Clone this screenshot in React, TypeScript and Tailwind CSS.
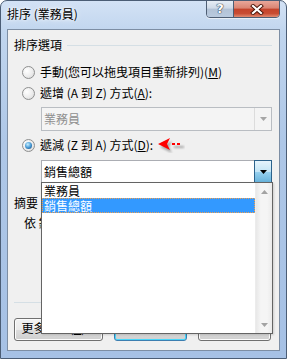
import React from 'react'

const cjk = "font-['Noto_Sans_CJK_TC','Liberation_Sans',sans-serif]"

function Radio({ checked }: { checked?: boolean }) {
  return (
    <span className="flex w-[13px] h-[13px] shrink-0 items-center justify-center rounded-full border border-[#8e8f8f] bg-[radial-gradient(circle_at_35%_35%,#ffffff_0%,#ececec_55%,#d4d4d4_100%)]">
      {checked && (
        <span className="w-[7px] h-[7px] rounded-full bg-[radial-gradient(circle_at_40%_35%,#c8f0ff_0%,#4a9bd6_50%,#0e3f70_100%)]" />
      )}
    </span>
  )
}

function RedArrow() {
  return (
    <svg width="28" height="16" viewBox="0 0 28 16" className="shrink-0">
      <defs>
        <filter id="sh" x="-20%" y="-50%" width="140%" height="200%">
          <feGaussianBlur stdDeviation="1.3" />
        </filter>
      </defs>
      <g fill="#000" opacity="0.3" filter="url(#sh)" transform="translate(2,3)">
        <path d="M1 7 L13 1 L10 7 L13 13 Z" />
        <rect x="15" y="6" width="10" height="2" />
      </g>
      <path d="M1 7 L13 1 L10 7 L13 13 Z" fill="#ff0000" />
      <rect x="15" y="6" width="3" height="2" fill="#ff0000" />
      <rect x="20" y="6" width="3" height="2" fill="#ff0000" />
    </svg>
  )
}

function Triangle({ color, up }: { color: string; up?: boolean }) {
  return (
    <svg width="7" height="4" viewBox="0 0 7 4">
      <path d={up ? 'M0 4 L7 4 L3.5 0 Z' : 'M0 0 L7 0 L3.5 4 Z'} fill={color} />
    </svg>
  )
}

function WinButton({ width, focused, children }: { width: string; focused?: boolean; children?: React.ReactNode }) {
  return (
    <div
      className={
        (focused
          ? 'border-[#3c7fb1] shadow-[inset_0_0_0_1px_#48d8fb] '
          : 'border-[#707070] shadow-[inset_0_0_0_1px_#fcfcfc] ') +
        width +
        ' flex h-[23px] items-start justify-center rounded-[3px] border bg-[linear-gradient(180deg,#f2f2f2_0%,#ebebeb_50%,#dddddd_51%,#cfcfcf_100%)] pt-[2px] text-[12px] leading-[14px] text-black'
      }
    >
      {children}
    </div>
  )
}

export default function App() {
  return (
    <div className={`${cjk} relative w-[287px] h-[359px] overflow-hidden rounded-t-[7px] border border-[#4b5d75] bg-[linear-gradient(180deg,#d3e2f5_0%,#c0d5ee_9%,#aec7e7_40%,#a6c1e5_100%)] text-black select-none`}>
      {/* title bar */}
      <div className="flex h-[28px] items-start justify-between pl-[6px] pr-[6px]">
        <span className="mt-[6px] text-[12px] leading-[14px] [text-shadow:0_0_6px_#ffffff,0_0_3px_#ffffff]">排序 (業務員)</span>
        <div className="flex h-[18px] -mt-px overflow-hidden rounded-b-[4px] border border-[#4e5e74] shadow-[0_1px_0_#e8eef6]">
          <div className="flex w-[27px] items-center justify-center border-r border-[#4e5e74] bg-[linear-gradient(180deg,#e6edf5_0%,#cfdae8_45%,#b2c2d6_50%,#b9cadf_100%)]">
            <span className="font-['DejaVu_Sans',sans-serif] text-[13px] font-bold leading-[14px] text-white [text-shadow:0_0_1px_#2c3a4c,0_0_1px_#2c3a4c,0_0_1px_#2c3a4c]">?</span>
          </div>
          <div className="flex w-[45px] items-center justify-center bg-[linear-gradient(180deg,#e9a79a_0%,#da8472_45%,#c4432b_50%,#c84c33_78%,#e18b72_100%)]">
            <svg width="14" height="11" viewBox="0 0 14 11">
              <path d="M3 2 L11 9 M11 2 L3 9" stroke="#4a1408" strokeWidth="4" strokeLinecap="square" />
              <path d="M3 2 L11 9 M11 2 L3 9" stroke="#ffffff" strokeWidth="2.2" strokeLinecap="square" />
            </svg>
          </div>
        </div>
      </div>

      {/* client area */}
      <div className="mx-[6px] h-[322px] border border-[#7d8ea4] bg-[#f0f0f0]">
        <div className="relative flex h-full flex-col pl-[6px] pr-[7px] text-[12px] leading-[14px]">
          <div className="mt-[8px] flex h-[14px] items-center gap-[5px]">
            <span>排序選項</span>
            <div className="h-px flex-1 bg-[#d5dfe5]" />
          </div>

          <div className="mt-[13px] ml-[8px] flex h-[14px] items-center gap-[5px]">
            <Radio />
            <span>
              手動(您可以拖曳項目重新排列)(<span className="underline">M</span>)
            </span>
          </div>

          <div className="mt-[7px] ml-[8px] flex h-[14px] items-center gap-[5px]">
            <Radio />
            <span>
              遞增 (A 到 Z) 方式(<span className="underline">A</span>):
            </span>
          </div>

          <div className="mt-[7px] ml-[27px] flex h-[24px] items-center border border-[#b9bdc2] bg-[#f4f4f4]">
            <span className="flex-1 pl-[2px] text-[#8f8f8f]">業務員</span>
            <div className="flex h-full w-[17px] items-center justify-center border-l border-[#dcdcdc]">
              <Triangle color="#a6a6a6" />
            </div>
          </div>

          <div className="mt-[7px] ml-[8px] flex h-[14px] items-center gap-[4px]">
            <Radio checked />
            <span className="ml-px">
              遞減 (Z 到 A) 方式(<span className="underline">D</span>):
            </span>
            <RedArrow />
          </div>

          <div className="mt-[8px] ml-[27px] flex h-[23px] items-center border border-[#abadb3] bg-white">
            <span className="flex-1 pl-[2px]">銷售總額</span>
            <div className="-my-px -mr-px flex h-[23px] w-[18px] items-center justify-center border border-[#2c628b] bg-[linear-gradient(180deg,#e5f4fc_0%,#c4e5f6_50%,#98d1ef_51%,#68b3db_100%)]">
              <Triangle color="#000000" />
            </div>
          </div>

          <div className="mt-[13px] flex h-[14px] items-center gap-[5px]">
            <span>摘要</span>
            <div className="h-px flex-1 bg-[#d5dfe5]" />
          </div>

          <div className="mt-[6px] ml-[10px] h-[14px] whitespace-nowrap">依 銷售總額 遞減排序 業務員</div>

          <div className="mt-[72px] h-px bg-[#d5dfe5]" />

          <div className="mt-[15px] flex gap-[11px] pr-px">
            <WinButton width="w-[89px]">
              更多選項(<span className="underline">R</span>)...
            </WinButton>
            <WinButton width="w-[73px]" focused>
              確定
            </WinButton>
            <WinButton width="w-[73px]">取消</WinButton>
          </div>

          {/* open dropdown list */}
          <div className="absolute left-[33px] top-[152px] flex h-[152px] w-[232px] border border-[#646464] bg-white shadow-[1px_1px_2px_rgba(0,0,0,0.15)]">
            <div className="flex flex-1 flex-col">
              <div className="h-[15px] pl-[2px] leading-[15px]">業務員</div>
              <div className="h-[15px] border border-dotted border-[#f0a050] bg-[#3399ff] pl-px leading-[13px] text-white">銷售總額</div>
            </div>
            <div className="flex w-[17px] flex-col justify-between border-l border-[#ececec] bg-[linear-gradient(90deg,#e8e8e8_0%,#f5f5f5_30%,#f5f5f5_70%,#ebebeb_100%)]">
              <div className="flex h-[17px] items-center justify-center">
                <Triangle color="#a3a3a3" up />
              </div>
              <div className="flex h-[17px] items-center justify-center">
                <Triangle color="#a3a3a3" />
              </div>
            </div>
          </div>
        </div>
      </div>
    </div>
  )
}
